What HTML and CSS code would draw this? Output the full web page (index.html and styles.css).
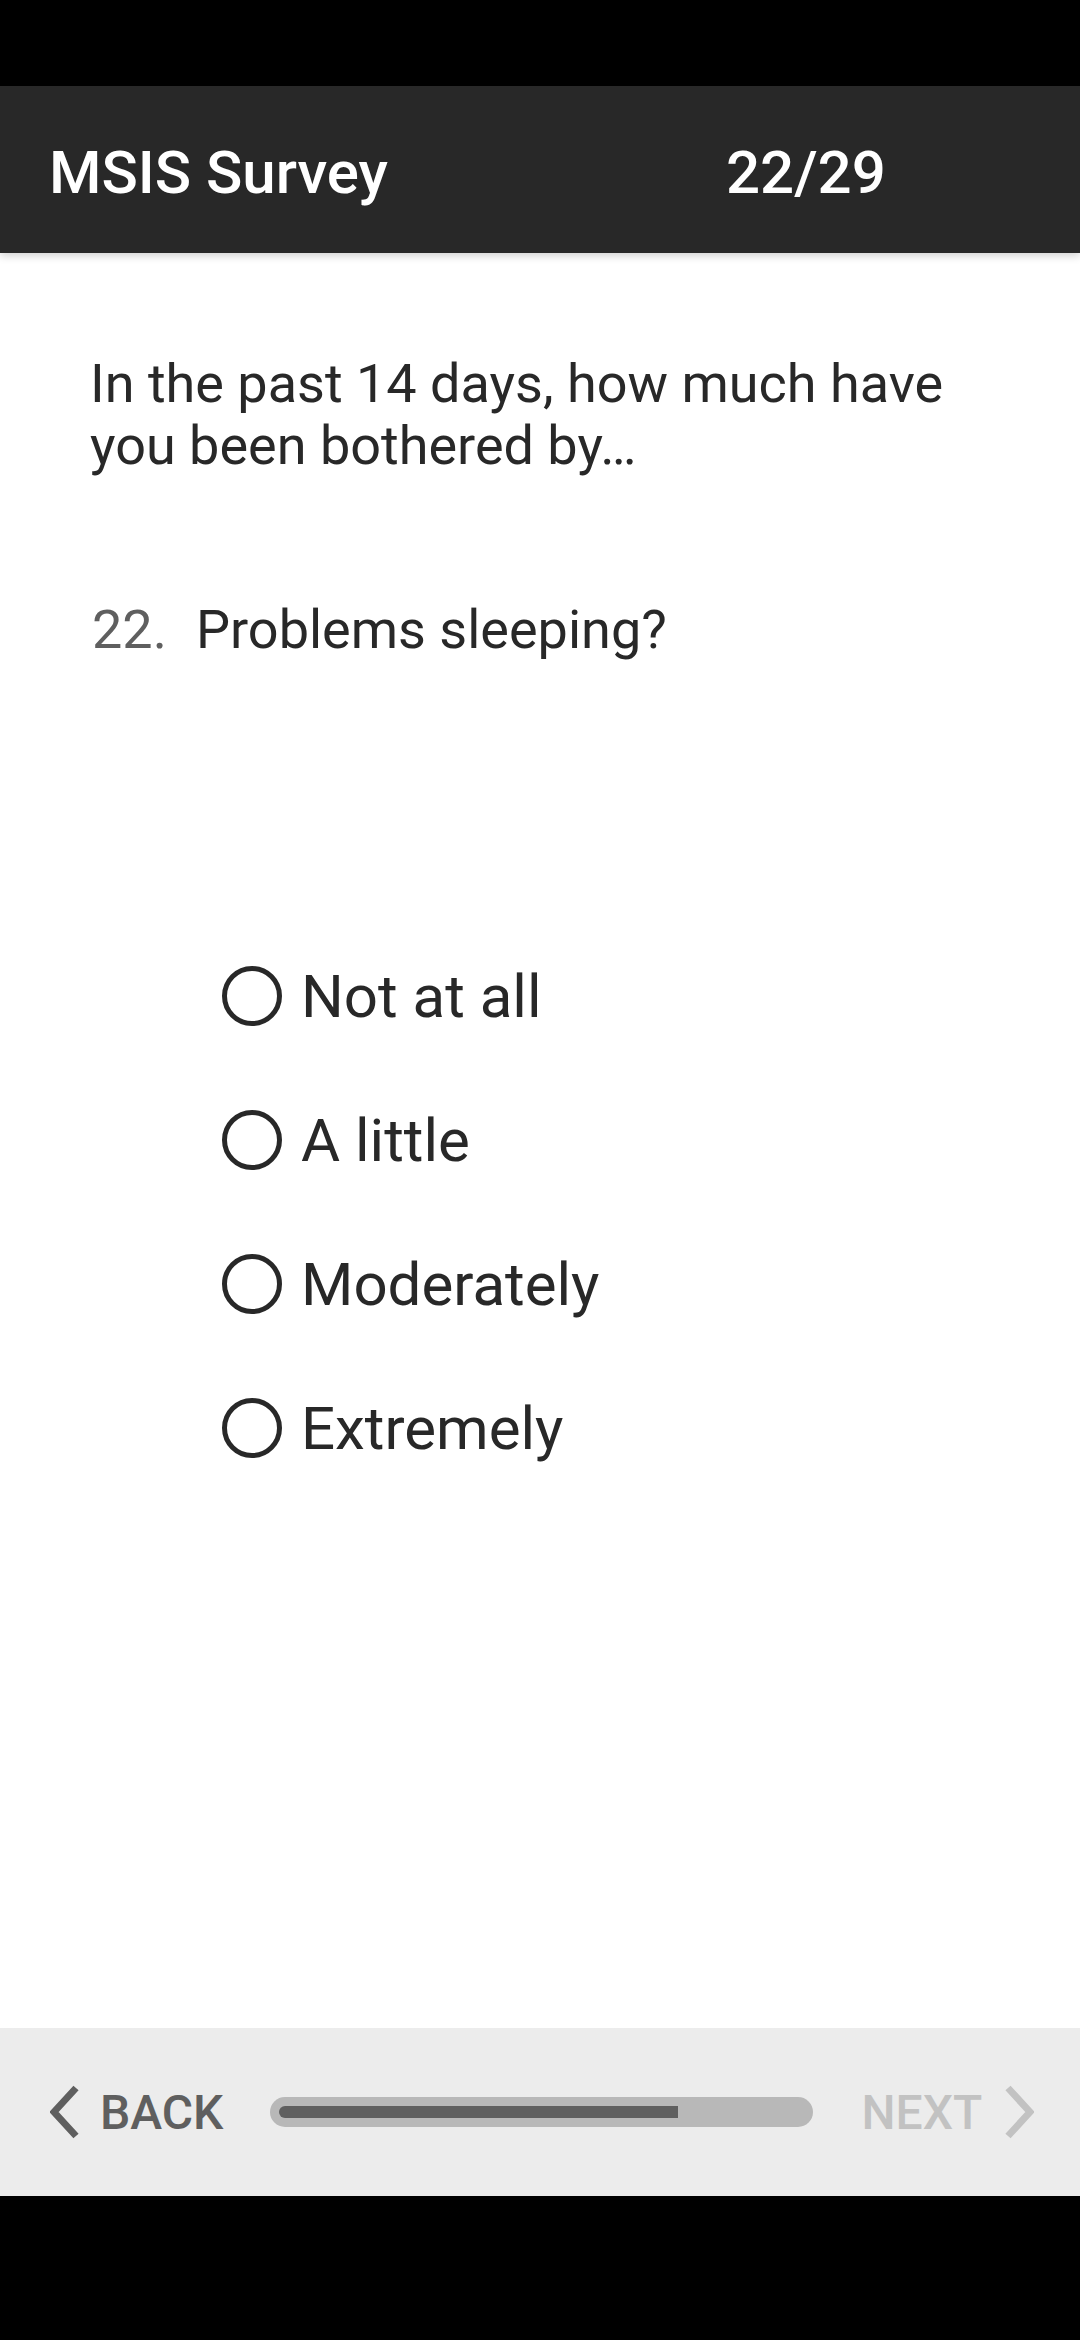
FILE: index.html
```html
<!DOCTYPE html>
<html lang="en">
<head>
<meta charset="utf-8">
<title>MSIS Survey</title>
<link rel="stylesheet" href="styles.css">
</head>
<body>
<div class="screen">
  <div class="status-bar"></div>
  <header class="app-bar">
    <div class="app-title">MSIS Survey</div>
    <div class="app-count">22/29</div>
  </header>
  <main class="content">
    <p class="intro">In the past 14 days, how much have you been bothered by…</p>
    <div class="question">
      <span class="q-num">22.</span>
      <span class="q-text">Problems sleeping?</span>
    </div>
    <ul class="options">
      <li class="option"><span class="radio"></span><span class="opt-label">Not at all</span></li>
      <li class="option"><span class="radio"></span><span class="opt-label">A little</span></li>
      <li class="option"><span class="radio"></span><span class="opt-label">Moderately</span></li>
      <li class="option"><span class="radio"></span><span class="opt-label">Extremely</span></li>
    </ul>
  </main>
  <footer class="nav">
    <div class="nav-back">
      <svg class="chev" width="30" height="54" viewBox="0 0 30 54"><polyline points="26,3 4,27 26,51" fill="none" stroke="#5f5f5f" stroke-width="7" stroke-linejoin="miter"/></svg>
      <span class="nav-label">BACK</span>
    </div>
    <div class="progress"><div class="progress-fill" style="width:76%"></div></div>
    <div class="nav-next">
      <span class="nav-label">NEXT</span>
      <svg class="chev" width="30" height="54" viewBox="0 0 30 54"><polyline points="4,3 26,27 4,51" fill="none" stroke="#c2c2c2" stroke-width="7" stroke-linejoin="miter"/></svg>
    </div>
  </footer>
  <div class="system-nav"></div>
</div>
</body>
</html>
```
FILE: styles.css
```css
* { box-sizing: border-box; }
html, body { margin: 0; padding: 0; background: #000; }
body { font-family: Roboto, "Noto Sans", "Liberation Sans", sans-serif; }

.screen {
  width: 1080px;
  height: 2340px;
  display: flex;
  flex-direction: column;
  background: #fff;
}

.status-bar { height: 86px; background: #000; flex: 0 0 auto; }

.app-bar {
  height: 167px;
  flex: 0 0 auto;
  background: #282828;
  display: grid;
  grid-template-columns: 677px auto;
  align-items: center;
  padding: 6px 0 0 49px;
  color: #fff;
  font-size: 60px;
  font-weight: 500;
  line-height: 60px;
  box-shadow: 0 3px 8px rgba(0,0,0,0.18);
  position: relative;
  z-index: 1;
}

.content {
  flex: 1 1 auto;
  background: #fff;
  padding: 100px 60px 0 90px;
  color: #282828;
}

.intro {
  margin: 0;
  font-size: 54px;
  line-height: 62px;
  color: #282828;
}

.question {
  margin-top: 123px;
  display: flex;
  font-size: 54px;
  line-height: 60px;
}
.q-num { width: 106px; flex: 0 0 auto; color: #5f5f5f; padding-left: 2px; }
.q-text { color: #282828; }

.options {
  list-style: none;
  margin: 264px 0 0 0;
  padding: 0 0 0 132px;
}
.option {
  height: 144px;
  display: flex;
  align-items: center;
  gap: 19px;
}
.radio {
  width: 60px;
  height: 60px;
  border: 5px solid #282828;
  border-radius: 50%;
  flex: 0 0 auto;
}
.opt-label {
  font-size: 60px;
  line-height: 60px;
  color: #282828;
  padding-top: 2px;
}

.nav {
  height: 168px;
  flex: 0 0 auto;
  background: #ececec;
  display: flex;
  align-items: center;
  padding: 0 0 0 50px;
}
.nav-back, .nav-next {
  display: flex;
  align-items: center;
}
.nav-back { gap: 20px; color: #5f5f5f; }
.nav-next { gap: 22px; color: #c2c2c2; margin-left: 48px; }
.nav-label {
  font-size: 48px;
  font-weight: 500;
  line-height: 48px;
  padding-top: 2px;
}
.chev { display: block; }

.progress {
  margin-left: 47px;
  width: 543px;
  height: 30px;
  border-radius: 15px;
  background: #b8b8b8;
  padding: 9px;
}
.progress-fill {
  height: 12px;
  background: #5f5f5f;
  border-radius: 6px 0 0 6px;
}

.system-nav { height: 144px; background: #000; flex: 0 0 auto; }
```
